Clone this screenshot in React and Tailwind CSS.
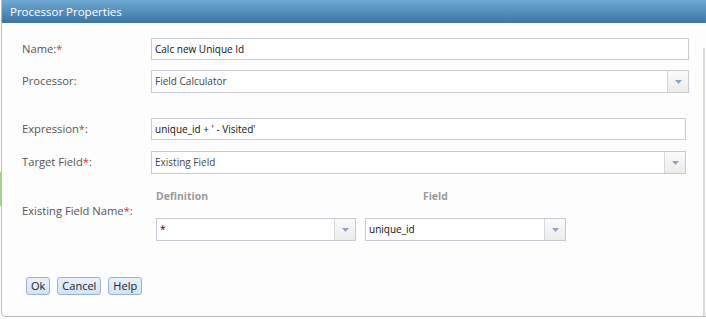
import React from 'react';

const font = { fontFamily: '"Open Sans", "Noto Sans", sans-serif' };

function Req() {
  return <span className="text-[#e0302a]">*</span>;
}

function Arrow() {
  return (
    <div className="w-[21px] self-stretch border-l border-[#d3d7de] bg-gradient-to-b from-[#fafafa] to-[#ececec] flex items-center justify-center">
      <svg width="7" height="4" viewBox="0 0 7 4">
        <polygon points="0,0 7,0 3.5,4" fill="#8ea4c4" />
      </svg>
    </div>
  );
}

function Select({ value, width, dark }) {
  return (
    <div className={`${width} h-[23px] border border-[#c6cbd3] bg-white flex items-center`}>
      <div className={`flex-1 pl-[3px] text-[10px] ${dark ? 'text-[#111]' : 'text-[#444]'}`}>{value}</div>
      <Arrow />
    </div>
  );
}

function Input({ value, width }) {
  return (
    <div className={`${width} h-[22px] border border-[#c6cbd3] bg-white flex items-center pl-[3px] text-[10px] text-[#111]`}>
      {value}
    </div>
  );
}

function Row({ label, children, className }) {
  return (
    <div className={`flex items-center ${className}`}>
      <div className="w-[129px] text-[11.2px] text-[#555]">{label}</div>
      {children}
    </div>
  );
}

export default function App() {
  return (
    <div className="w-[706px] h-[319px] bg-white relative overflow-hidden" style={font}>
      {/* page behind the dialog */}
      <div className="absolute left-0 top-[172px] w-[1px] h-[34px] bg-[#a6d48f]" />

      <div className="ml-[1px] w-[710px] h-[317px] border-l border-b border-[#b9bcc1] rounded-bl-[5px] bg-[#fdfdfd] flex flex-col">
        <div className="h-[23px] bg-gradient-to-b from-[#6eaad4] to-[#3c74a2] flex items-center pl-[8px] text-white text-[11.5px]">
          Processor Properties
        </div>

        <div className="flex-1 flex">
          <div className="w-[701px] pl-[20px]">
            <Row label={<>Name:<Req /></>} className="mt-[15px]">
              <Input value="Calc new Unique Id" width="w-[538px]" />
            </Row>
            <Row label="Processor:" className="mt-[10px]">
              <Select value="Field Calculator" width="w-[538px]" />
            </Row>
            <Row label={<>Expression<Req />:</>} className="mt-[25px]">
              <Input value="unique_id + ' - Visited'" width="w-[535px]" />
            </Row>
            <Row label={<>Target Field<Req />:</>} className="mt-[11px]">
              <Select value="Existing Field" width="w-[535px]" />
            </Row>

            <div className="flex mt-[12px]">
              <div className="w-[129px] pt-[17px] text-[11.2px] text-[#555]">
                Existing Field Name<Req />:
              </div>
              <div className="pl-[5px]">
                <div className="flex text-[10.4px] font-bold text-[#9a9a9a] h-[22px] items-center">
                  <div className="w-[267px]">Definition</div>
                  <div>Field</div>
                </div>
                <div className="flex gap-[9px] mt-[10px]">
                  <Select value="*" width="w-[200px]" dark />
                  <Select value="unique_id" width="w-[201px]" dark />
                </div>
              </div>
            </div>

            <div className="flex gap-[7px] mt-[36px] ml-[4px]">
              {['Ok', 'Cancel', 'Help'].map((b) => (
                <div
                  key={b}
                  className="h-[18px] px-[4px] border border-[#98b2d4] rounded-[3px] bg-gradient-to-b from-[#e8f1fb] to-[#d3e3f4] text-[11px] text-[#222] flex items-center"
                >
                  {b}
                </div>
              ))}
            </div>
          </div>
          <div className="w-[8px] mt-[25px] border-l-2 border-[#d7d9dc]" />
        </div>
      </div>
    </div>
  );
}
